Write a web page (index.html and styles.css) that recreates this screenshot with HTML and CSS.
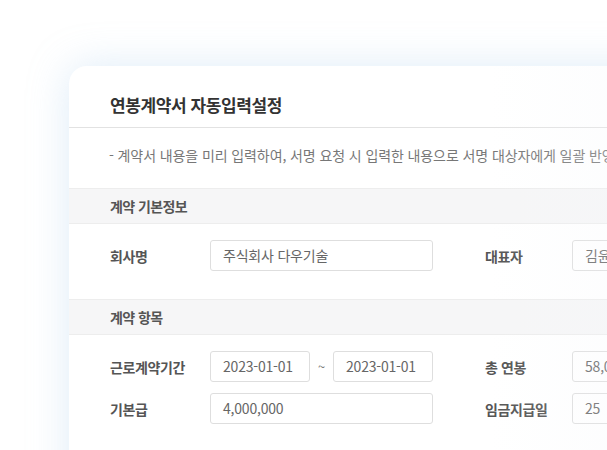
FILE: index.html
```html
<!DOCTYPE html>
<html lang="ko">
  <head>
    <meta charset="UTF-8" />
    <title>연봉계약서 자동입력설정</title>
    <link rel="stylesheet" href="styles.css">
  </head>
  <body>
    <div class="card">
      <h2 class="card-title">연봉계약서 자동입력설정</h2>
      <p class="desc">- 계약서 내용을 미리 입력하여, 서명 요청 시 입력한 내용으로 서명 대상자에게 일괄 반영됩니다.</p>

      <div class="band">계약 기본정보</div>
      <div class="rows">
        <div class="row">
          <span class="label">회사명</span>
          <div class="field">주식회사 다우기술</div>
          <span class="label label-right">대표자</span>
          <div class="field">김윤덕</div>
        </div>
      </div>

      <div class="band">계약 항목</div>
      <div class="rows">
        <div class="row">
          <span class="label">근로계약기간</span>
          <div class="range">
            <div class="field date">2023-01-01</div>
            <span class="tilde">~</span>
            <div class="field date">2023-01-01</div>
          </div>
          <span class="label label-right">총 연봉</span>
          <div class="field">58,000,000</div>
        </div>
        <div class="row">
          <span class="label">기본급</span>
          <div class="field">4,000,000</div>
          <span class="label label-right">임금지급일</span>
          <div class="field">25</div>
        </div>
      </div>

      <div class="fade"></div>
    </div>
  </body>
</html>
```

FILE: styles.css
```css
body {
  margin: 0;
  background: #ffffff;
  font-family: "Noto Sans CJK KR", "Noto Sans", sans-serif;
  overflow: hidden;
  height: 450px;
}

.card {
  position: relative;
  margin: 66px 0 0 69px;
  width: 820px;
  height: 460px;
  background: #ffffff;
  border-radius: 18px;
  box-shadow: 0 0 40px rgba(160, 200, 235, 0.35);
  overflow: hidden;
}

.card-title {
  margin: 0;
  padding: 26px 41px 0;
  height: 35px;
  font-size: 17px;
  font-weight: bold;
  color: #333333;
  letter-spacing: -0.4px;
  border-bottom: 1px solid #e2e2e2;
}

.desc {
  margin: 0;
  padding: 17px 0 0 40px;
  height: 43px;
  font-size: 14px;
  color: #777777;
  letter-spacing: -0.1px;
  white-space: nowrap;
}

.band {
  height: 34px;
  line-height: 34px;
  padding-left: 41px;
  background: #f6f6f7;
  border-top: 1px solid #ededed;
  border-bottom: 1px solid #ededed;
  font-size: 14px;
  font-weight: bold;
  color: #555555;
  letter-spacing: -0.6px;
}

.rows {
  display: flex;
  flex-direction: column;
  gap: 11px;
  padding: 16px 0 28px 41px;
}

.row {
  display: flex;
  align-items: center;
}

.label {
  flex-shrink: 0;
  width: 100px;
  font-size: 14px;
  font-weight: bold;
  color: #555555;
  letter-spacing: -0.4px;
}

.label-right {
  width: 87px;
  margin-left: 52px;
}

.field {
  flex-shrink: 0;
  box-sizing: border-box;
  width: 223px;
  height: 31px;
  line-height: 29px;
  padding-left: 12px;
  border: 1px solid #dedede;
  border-radius: 3px;
  font-size: 14px;
  color: #666666;
  letter-spacing: -0.2px;
}

.range {
  flex-shrink: 0;
  display: flex;
  align-items: center;
  width: 223px;
}

.field.date {
  width: 100px;
}

.tilde {
  width: 24px;
  text-align: center;
  font-size: 13px;
  color: #777777;
}

.fade {
  position: absolute;
  top: 0;
  right: 0;
  bottom: 0;
  width: 400px;
  background: linear-gradient(to right, rgba(248, 249, 251, 0), rgba(245, 247, 250, 0.7));
  pointer-events: none;
}
```
